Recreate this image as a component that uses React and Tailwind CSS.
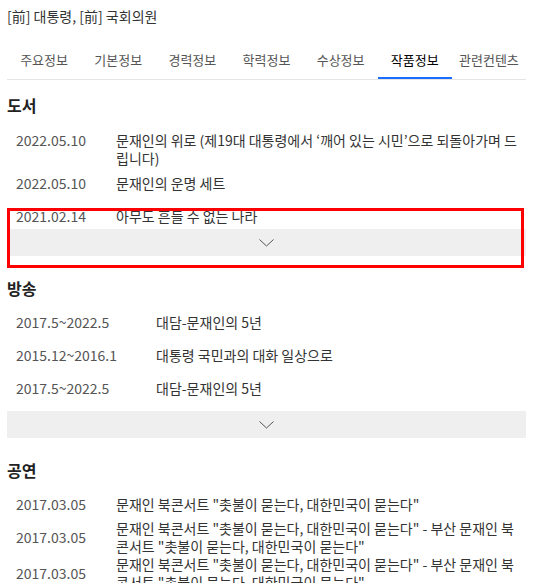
import { useState } from 'react';

const tabs = ['주요정보', '기본정보', '경력정보', '학력정보', '수상정보', '작품정보', '관련컨텐츠'];

const books = [
  { date: '2022.05.10', title: '문재인의 위로 (제19대 대통령에서 ‘깨어 있는 시민’으로 되돌아가며 드립니다)' },
  { date: '2022.05.10', title: '문재인의 운명 세트' },
  { date: '2021.02.14', title: '아무도 흔들 수 없는 나라' },
];

const shows = [
  { date: '2017.5~2022.5', title: '대담-문재인의 5년' },
  { date: '2015.12~2016.1', title: '대통령 국민과의 대화 일상으로' },
  { date: '2017.5~2022.5', title: '대담-문재인의 5년' },
];

const concerts = [
  { date: '2017.03.05', title: '문재인 북콘서트 "촛불이 묻는다, 대한민국이 묻는다"' },
  { date: '2017.03.05', title: '문재인 북콘서트 "촛불이 묻는다, 대한민국이 묻는다" - 부산 문재인 북콘서트 "촛불이 묻는다, 대한민국이 묻는다"' },
  { date: '2017.03.05', title: '문재인 북콘서트 "촛불이 묻는다, 대한민국이 묻는다" - 부산 문재인 북콘서트 "촛불이 묻는다, 대한민국이 묻는다"' },
];

function MoreBar() {
  return (
    <button className="flex h-[27px] w-full items-center justify-center bg-[#efefef]">
      <svg width="15" height="8" viewBox="0 0 15 8" fill="none">
        <polyline points="0.5,0.5 7.5,7 14.5,0.5" stroke="#555" strokeWidth="1" />
      </svg>
    </button>
  );
}

function Row({ date, title, dateWidth }) {
  return (
    <li className="flex items-start">
      <span className={`${dateWidth} shrink-0 py-[7px] pl-[9px] text-[14px] leading-[19px] text-[#555]`}>{date}</span>
      <span className="pt-[7px] text-[14px] leading-[18px] text-[#333]">{title}</span>
    </li>
  );
}

export default function App() {
  const [active, setActive] = useState(5);

  return (
    <div className="relative h-[583px] w-[533px] overflow-hidden bg-white px-[7px] font-['Noto_Sans_CJK_KR',sans-serif]">
      <p className="pt-[7px] text-[14px] leading-[19px] text-[#333]">[前] 대통령, [前] 국회의원</p>

      <nav className="mt-[17px] flex border-b border-[#e5e5e5]">
        {tabs.map((tab, i) => (
          <button
            key={tab}
            onClick={() => setActive(i)}
            className={`flex h-[36px] flex-1 items-center justify-center border-b-2 text-[13px] ${
              active === i ? 'border-[#1a6dff] text-black' : 'border-transparent text-[#555]'
            }`}
          >
            {tab}
          </button>
        ))}
      </nav>

      <section>
        <h2 className="mt-[14px] text-[16px] font-bold leading-[22px] text-[#222]">도서</h2>
        <ul className="mt-[8px] h-[105px] overflow-hidden">
          {books.map((b, i) => (
            <Row key={i} {...b} dateWidth="w-[109px]" />
          ))}
        </ul>
        <MoreBar />
      </section>

      <section>
        <h2 className="mt-[21px] text-[16px] font-bold leading-[22px] text-[#222]">방송</h2>
        <ul className="mt-[7px] h-[105px] overflow-hidden">
          {shows.map((s, i) => (
            <Row key={i} {...s} dateWidth="w-[149px]" />
          ))}
        </ul>
        <MoreBar />
      </section>

      <section>
        <h2 className="mt-[21px] text-[16px] font-bold leading-[22px] text-[#222]">공연</h2>
        <ul className="mt-[8px]">
          {concerts.map((c, i) => (
            <li key={i} className="flex items-center">
              <span className="flex h-[30px] w-[109px] shrink-0 items-center pl-[9px] text-[14px] text-[#555]">{c.date}</span>
              <span className="text-[14px] leading-[18px] text-[#333]">{c.title}</span>
            </li>
          ))}
        </ul>
      </section>

      {/* highlight box */}
      <div className="pointer-events-none absolute left-[7px] top-[208px] h-[60px] w-[517px] border-[3px] border-[#ff0000]" />
    </div>
  );
}
